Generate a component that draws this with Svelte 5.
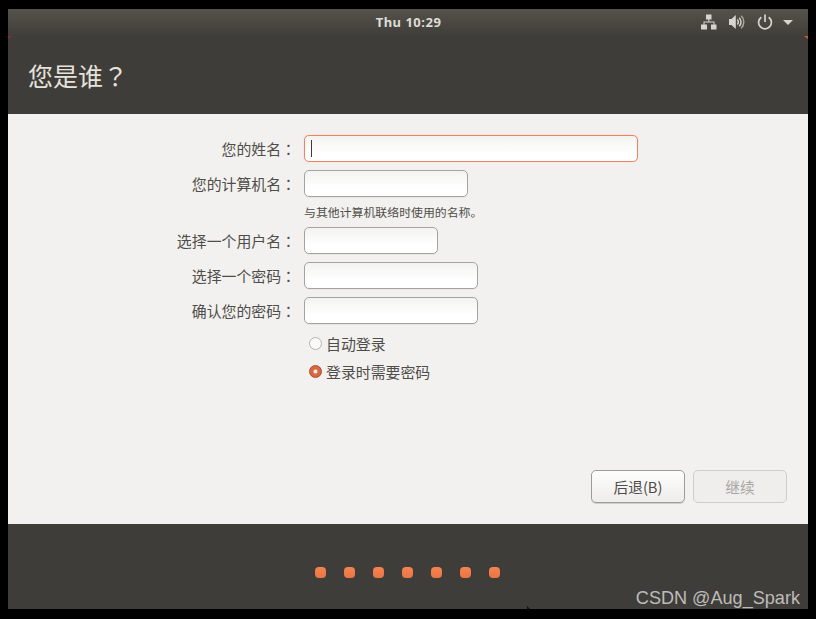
<script>
  const fields = [
    { label: '您的姓名', width: 334, focus: true },
    { label: '您的计算机名', width: 164, hint: '与其他计算机联络时使用的名称。' },
    { label: '选择一个用户名', width: 134 },
    { label: '选择一个密码', width: 174 },
    { label: '确认您的密码', width: 174 }
  ];
  const steps = [1, 2, 3, 4, 5, 6, 7];
</script>

<div class="screen">
  <div class="panel">
    <span class="clock">Thu 10:29</span>
    <div class="tray">
      <svg width="16" height="16" viewBox="0 0 16 16" fill="#d6d4cf">
        <rect x="5" y="0.500" width="5.500" height="5" />
        <rect x="0" y="10.500" width="6" height="5" />
        <rect x="10" y="10.500" width="5.500" height="5" />
        <path d="M7.300 5h1v2.500h5.200V11h-1V8.500H3.500V11h-1V7.500h4.800z" />
      </svg>
      <svg width="16" height="16" viewBox="0 0 16 16" fill="#d6d4cf">
        <path d="M0 5h2.500L6.800 1v14l-4.300-4H0z" />
        <path d="M8.300 5.500a3.500 3.500 0 0 1 0 5" fill="none" stroke="#d6d4cf" stroke-width="1.500" />
        <path d="M10.200 3.700a6 6 0 0 1 0 8.600" fill="none" stroke="#d6d4cf" stroke-width="1.500" />
        <path d="M12.200 1.800a8.700 8.700 0 0 1 0 12.400" fill="none" stroke="#a9a7a2" stroke-width="1.500" />
      </svg>
      <svg width="16" height="16" viewBox="0 0 16 16" fill="none" stroke="#d6d4cf" stroke-width="1.700">
        <path d="M4.300 3.200a6.400 6.400 0 1 0 7.400 0" />
        <path d="M8 0.500v7.500" />
      </svg>
      <span class="caret"></span>
    </div>
    <span class="corner left"></span>
    <span class="corner right"></span>
  </div>

  <header class="title"><h1>您是谁<span class="punct">？</span></h1></header>

  <main class="body">
    <div class="form">
      {#each fields as f (f.label)}
        <label class="lbl" for={f.label}>{f.label}<span class="punct">：</span></label>
        <div class="field">
          <div class="input" class:focus={f.focus} id={f.label} style="width: {f.width}px">
            {#if f.focus}<span class="cursor"></span>{/if}
          </div>
          {#if f.hint}<p class="hint">{f.hint}</p>{/if}
        </div>
      {/each}
    </div>

    <div class="radios">
      <div class="radio-row">
        <span class="radio"></span>
        <span>自动登录</span>
      </div>
      <div class="radio-row">
        <span class="radio on"></span>
        <span>登录时需要密码</span>
      </div>
    </div>

    <div class="actions">
      <button class="btn">后退(B)</button>
      <button class="btn disabled">继续</button>
    </div>
  </main>

  <footer class="foot">
    {#each steps as s (s)}
      <span class="dot"></span>
    {/each}
    <span class="pointer"></span>
  </footer>
</div>

<div class="mark">CSDN @Aug_Spark</div>

<style>
  :global(body) {
    background: #000;
    overflow: hidden;
  }
  .screen {
    width: 800px;
    height: 600px;
    margin: 9px 8px 10px;
    display: flex;
    flex-direction: column;
    font-family: "Noto Sans CJK SC", "Noto Sans", sans-serif;
    background: #3f3d39;
  }
  .panel {
    height: 28px;
    flex: none;
    display: flex;
    align-items: center;
    justify-content: center;
    position: relative;
    background: linear-gradient(#55524b, #3f3d39);
  }
  .clock {
    font-family: "Noto Sans", sans-serif;
    font-size: 13px;
    font-weight: 700;
    letter-spacing: 0.5px;
    color: #dedcd7;
    margin: -3px 0 0 1px;
  }
  .tray {
    position: absolute;
    top: 5px;
    right: 15px;
    display: flex;
    align-items: center;
    gap: 12px;
  }
  .caret {
    width: 0;
    height: 0;
    margin-left: -2px;
    border-left: 5px solid transparent;
    border-right: 5px solid transparent;
    border-top: 5px solid #d6d4cf;
  }
  .corner {
    position: absolute;
    bottom: -2px;
    width: 0;
    height: 0;
    border-top: 3px solid #8e2b2b;
  }
  .corner.left {
    left: 0;
    border-right: 4px solid transparent;
  }
  .corner.right {
    right: 0;
    border-top-color: #d9572b;
    border-left: 4px solid transparent;
  }
  .title {
    height: 77px;
    flex: none;
    box-sizing: border-box;
    padding: 20px 0 0 20px;
  }
  h1 {
    margin: 0;
    font-size: 25px;
    font-weight: 400;
    line-height: 36px;
    color: #e6e2dc;
  }
  .punct {
    font-family: "Noto Sans CJK TC", sans-serif;
  }
  .body {
    height: 410px;
    flex: none;
    background: #f2f1ef;
    position: relative;
    box-sizing: border-box;
    padding-top: 21px;
    color: #4f4d49;
    font-size: 14.900px;
  }
  .form {
    display: grid;
    grid-template-columns: 288px 1fr;
    column-gap: 8px;
    row-gap: 8px;
    align-items: start;
  }
  .lbl {
    text-align: right;
    line-height: 27px;
  }
  .input {
    height: 27px;
    box-sizing: border-box;
    border: 1px solid #a3a3a0;
    border-radius: 5px;
    background: linear-gradient(#f3f3f2, #fff 70%);
    box-shadow: 0 1px 0 rgba(0, 0, 0, 0.04);
    display: flex;
    align-items: center;
    padding-left: 6px;
  }
  .input.focus {
    border-color: #ec8560;
    box-shadow: 0 0 1px rgba(236, 133, 96, 0.6);
  }
  .cursor {
    width: 1px;
    height: 17px;
    background: #3c3b37;
  }
  .hint {
    margin: 7px 0 0;
    font-size: 11.900px;
    line-height: 15px;
    height: 15px;
  }
  .radios {
    margin: 9px 0 0 301px;
    display: flex;
    flex-direction: column;
    gap: 8px;
  }
  .radio-row {
    height: 20px;
    display: flex;
    align-items: center;
    gap: 4px;
  }
  .radio {
    width: 13px;
    height: 13px;
    box-sizing: border-box;
    border-radius: 50%;
    border: 1px solid #b5b4b0;
    background: #faf9f8;
  }
  .radio.on {
    border: 1px solid #b0492a;
    background: radial-gradient(circle, #fbe9e0 0 1.500px, #d5683f 2.500px);
  }
  .actions {
    position: absolute;
    right: 21px;
    bottom: 21px;
    display: flex;
    gap: 8px;
  }
  .btn {
    width: 94px;
    height: 33px;
    padding: 0;
    box-sizing: border-box;
    border: 1px solid #9c9b97;
    border-radius: 5px;
    background: linear-gradient(#fdfdfd, #eeedeb);
    color: #4f4d49;
    font: inherit;
    font-size: 14.700px;
    box-shadow: 0 1px 0 #cfcecb;
  }
  .btn.disabled {
    border-color: #cfcecb;
    background: #efeeec;
    color: #a9a7a3;
    box-shadow: none;
  }
  .foot {
    flex: 1;
    display: flex;
    justify-content: center;
    gap: 18px;
    padding: 43px 2px 0 0;
    box-sizing: border-box;
    position: relative;
  }
  .dot {
    width: 11px;
    height: 11px;
    border-radius: 4px;
    background: linear-gradient(#f58450, #ec7445);
  }
  .pointer {
    position: absolute;
    left: 519px;
    bottom: 0;
    width: 0;
    height: 0;
    border-left: 3px solid #111;
    border-top: 3px solid transparent;
  }
  .mark {
    position: absolute;
    right: 16px;
    top: 586px;
    font-family: "Liberation Sans", sans-serif;
    font-size: 18.100px;
    line-height: 24px;
    color: rgba(255, 255, 255, 0.66);
  }
</style>
